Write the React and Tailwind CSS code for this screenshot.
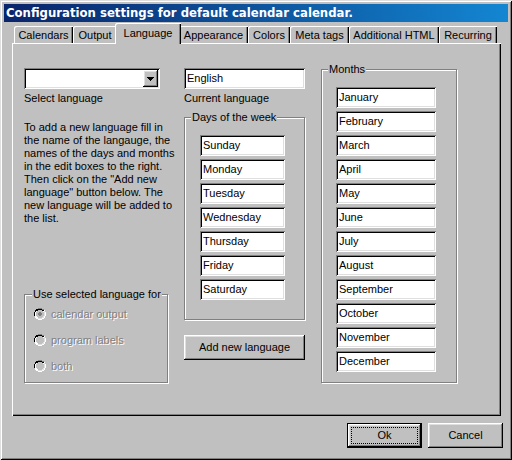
import React from "react";

const raised =
  "shadow-[inset_-1px_-1px_#000,inset_1px_1px_#fff,inset_-2px_-2px_#808080,inset_2px_2px_#dfdfdf]";
const sunken =
  "shadow-[inset_1px_1px_#808080,inset_-1px_-1px_#fff,inset_2px_2px_#000,inset_-2px_-2px_#dfdfdf]";

function Field({ value, w }) {
  return (
    <div className={`${w} h-[21px] bg-white ${sunken} flex items-center pl-[3px] whitespace-nowrap`}>
      {value}
    </div>
  );
}

function Group({ label, labelLeft, className, children }) {
  return (
    <div
      className={`relative border border-[#808080] shadow-[1px_1px_#fff,inset_1px_1px_#fff] ${className}`}
    >
      <div className={`absolute top-[-7px] ${labelLeft} px-[1px] bg-[#c0c0c0] leading-[13px] whitespace-nowrap`}>
        {label}
      </div>
      {children}
    </div>
  );
}

function Radio({ checked, label }) {
  return (
    <div className="flex items-center gap-[5px] h-[12px]">
      <svg width="12" height="12" viewBox="0 0 12 12" className="shrink-0">
        <path d="M4 0h4v1h2v1h1v2h1v4h-1v2h-1v1h-2v1h-4v-1h-2v-1h-1v-2h-1v-4h1v-2h1v-1h2z" fill="#fff" />
        <path d="M4 0h4v1h2v1h-2v-1h-4v1h-2v2h-1v4h-1v-4h1v-2h1v-1h2z" fill="#808080" />
        <path d="M4 1h4v1h2v1h-2v-1h-4v1h-2v1h-1v4h-1v-4h1v-2h1v-1h2z" fill="#000" />
        <path d="M4 2h4v1h1v1h1v4h-1v1h-1v1h-4v-1h-1v-1h-1v-4h1v-1h1z" fill="#c0c0c0" />
        <path d="M10 3h1v5h-1v2h-2v1h-4v-1h4v-1h1v-1h1z" fill="#dfdfdf" />
        {checked && <path d="M5 4h2v1h1v2h-1v1h-2v-1h-1v-2h1z" fill="#808080" />}
      </svg>
      <span className="text-[#808080] [text-shadow:1px_1px_0_#fff] leading-[13px] whitespace-nowrap">{label}</span>
    </div>
  );
}

const tabs = [
  ["Calendars", "w-[59px]"],
  ["Output", "w-[44px]"],
  ["Language", "w-[66px]", true],
  ["Appearance", "w-[69px]"],
  ["Colors", "w-[42px]"],
  ["Meta tags", "w-[59px]"],
  ["Additional HTML", "w-[90px]"],
  ["Recurring", "w-[58px]"],
];

const days = ["Sunday", "Monday", "Tuesday", "Wednesday", "Thursday", "Friday", "Saturday"];
const months = [
  "January",
  "February",
  "March",
  "April",
  "May",
  "June",
  "July",
  "August",
  "September",
  "October",
  "November",
  "December",
];

const para = [
  "To add a new language fill in",
  "the name of the langauge, the",
  "names of the days and months",
  "in the edit boxes to the right.",
  'Then click on the "Add new',
  'language" button below. The',
  "new language will be added to",
  "the list.",
];

export default function App() {
  return (
    <div className="w-[512px] h-[460px] bg-[#c0c0c0] shadow-[inset_1px_1px_#dfdfdf,inset_-1px_-1px_#000,inset_2px_2px_#fff,inset_-2px_-2px_#808080] p-[4px] flex flex-col text-[11px] leading-[13px] text-black font-['Liberation_Sans',Arial,sans-serif]">
      <div className="h-[18px] bg-linear-to-r from-[#0a246a] to-[#1486d2] flex items-center pl-[2px] text-white font-bold text-[11.7px] font-['DejaVu_Sans',sans-serif] whitespace-nowrap">
        Configuration settings for default calendar calendar.
      </div>
      <div className="pl-[8px] pr-[7px] flex flex-col">
        <div className="h-[21px] flex items-end pl-[2px]">
          {tabs.map(([t, w, sel]) =>
            sel ? (
              <div
                key={t}
                className={`${w} -mx-[2px] h-[21px] mb-[-1px] relative z-10 bg-[#c0c0c0] rounded-tl-[2px] shadow-[inset_1px_1px_#fff,inset_-1px_0_#000,inset_-2px_0_#808080] flex justify-center pt-[4px] whitespace-nowrap`}
              >
                {t}
              </div>
            ) : (
              <div
                key={t}
                className={`${w} h-[17px] rounded-tl-[2px] shadow-[inset_1px_1px_#fff,inset_-1px_0_#000,inset_-2px_0_#808080] flex justify-center pt-[3px] whitespace-nowrap`}
              >
                {t}
              </div>
            )
          )}
        </div>
        <div className="h-[373px] shadow-[inset_1px_1px_#fff,inset_-1px_-1px_#000,inset_-2px_-2px_#808080] pl-[12px] pt-[25px] flex gap-[16px]">
          {/* left column */}
          <div className="w-[144px] flex flex-col">
            <div className={`w-[136px] h-[21px] bg-white ${sunken} flex items-start justify-end pt-[2px] pr-[2px]`}>
              <div className={`w-[15px] h-[17px] bg-[#c0c0c0] ${raised} flex items-center justify-center`}>
                <svg width="7" height="4" viewBox="0 0 7 4">
                  <path d="M0 0h7v1h-1v1h-1v1h-1v1h-1v-1h-1v-1h-1v-1h-1z" fill="#000" />
                </svg>
              </div>
            </div>
            <div className="mt-[3px]">Select language</div>
            <div className="mt-[16px] flex flex-col">
              {para.map((l) => (
                <div key={l} className="whitespace-nowrap">
                  {l}
                </div>
              ))}
            </div>
            <Group label="Use selected language for" labelLeft="left-[7px]" className="mt-[69px] h-[89px] w-[144px] pt-[13px] pl-[9px] flex flex-col gap-[14px]">
              <Radio checked label="calendar output" />
              <Radio label="program labels" />
              <Radio label="both" />
            </Group>
          </div>
          {/* middle column */}
          <div className="w-[121px] flex flex-col">
            <Field value="English" w="w-[121px]" />
            <div className="mt-[3px]">Current language</div>
            <Group label="Days of the week" labelLeft="left-[6px]" className="mt-[12px] h-[203px] w-[121px] pt-[17px] pl-[15px] flex flex-col gap-[3px]">
              {days.map((d) => (
                <Field key={d} value={d} w="w-[85px]" />
              ))}
            </Group>
            <button className={`mt-[15px] w-[121px] h-[25px] bg-[#c0c0c0] ${raised} flex items-center justify-center`}>
              Add new language
            </button>
          </div>
          {/* right column */}
          <div className="w-[136px] flex flex-col">
            <Group label="Months" labelLeft="left-[6px]" className="mt-[1px] h-[314px] w-[136px] pt-[17px] pl-[14px] flex flex-col gap-[3px]">
              {months.map((m) => (
                <Field key={m} value={m} w="w-[100px]" />
              ))}
            </Group>
          </div>
        </div>
      </div>
      <div className="mt-[7px] flex justify-end gap-[6px] pr-[5px]">
        <button className="w-[75px] h-[25px] border border-black bg-[#c0c0c0] p-0">
          <div className={`w-full h-full ${raised} p-[3px]`}>
            <div className="w-full h-full border border-dotted border-black flex items-center justify-center">
              Ok
            </div>
          </div>
        </button>
        <button className={`w-[75px] h-[25px] bg-[#c0c0c0] ${raised} flex items-center justify-center`}>
          Cancel
        </button>
      </div>
    </div>
  );
}
